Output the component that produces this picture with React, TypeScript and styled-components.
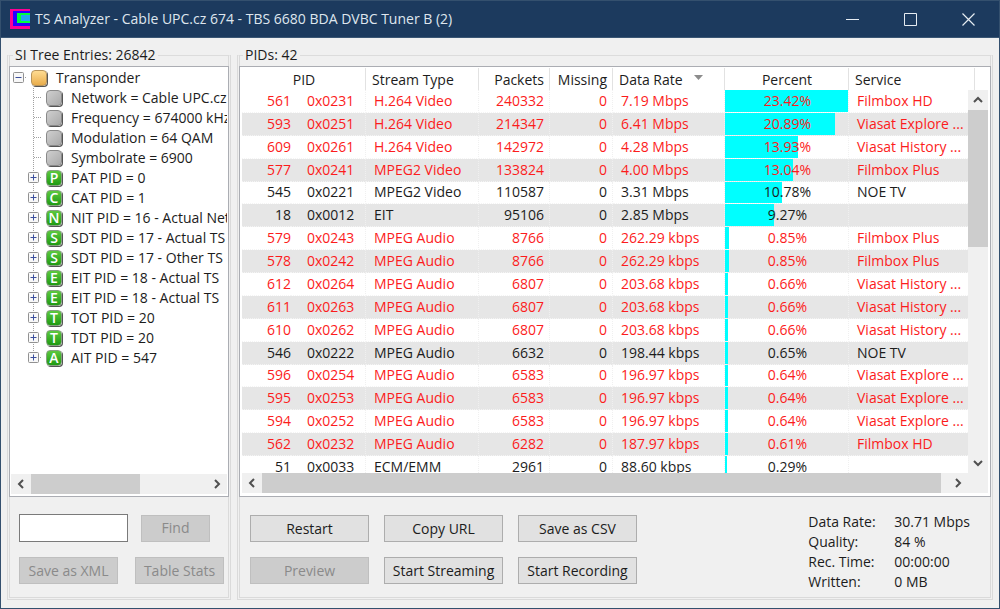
import React from 'react';
import styled, { createGlobalStyle } from 'styled-components';

const GlobalStyle = createGlobalStyle`
  * { box-sizing: border-box; }
  body {
    margin: 0;
    font: 14px/20px "Open Sans", "Noto Sans", sans-serif;
    color: #1c1c1c;
    background: #f0f0f0;
  }
`;

const Window = styled.div`
  height: 100vh;
  display: flex;
  flex-direction: column;
  background: #f0f0f0;
  border: 1px solid #34506e;
`;

const TitleBar = styled.header`
  flex: none;
  height: 37px;
  display: flex;
  align-items: center;
  gap: 5px;
  padding: 0 2px 0 9px;
  background: #1c3a5e;
  border-bottom: 1px solid #3a5674;
  color: #dfe6ee;
`;

const Title = styled.h1`
  flex: 1;
  min-width: 0;
  margin: 0;
  font-size: 14px;
  font-weight: 400;
  white-space: nowrap;
`;

const CaptionButton = styled.button`
  width: 58px;
  height: 36px;
  padding: 0;
  border: 0;
  background: none;
  color: #e6ecf2;
  display: flex;
  align-items: center;
  justify-content: center;
`;

const Main = styled.main`
  flex: 1;
  min-height: 0;
  display: grid;
  grid-template-columns: 224px minmax(0, 1fr);
  grid-template-rows: minmax(0, 1fr);
  gap: 6px;
  padding: 7px 6px 8px;
`;

const Group = styled.fieldset`
  display: flex;
  flex-direction: column;
  min-width: 0;
  min-height: 0;
  margin: 0;
  padding: 1px 0 0;
  border: 3px double #dadada;
  border-top: 1px solid #dcdcdc;
`;

const Legend = styled.legend`
  margin-left: 3px;
  padding: 0 2px;
  line-height: 20px;
`;

const ListBox = styled.div`
  flex: 1;
  min-height: 0;
  margin: 0 -1px;
  background: #fff;
  border: 1px solid #abadb3;
`;

const TreeBox = styled(ListBox)`
  display: flex;
  flex-direction: column;
  padding: 0 1px 2px;
`;

const TreeList = styled.ul`
  flex: 1;
  min-height: 0;
  margin: 0;
  padding: 1px 0 0;
  list-style: none;
  overflow: hidden;
`;

const SubList = styled.ul`
  margin: 0;
  padding: 0 0 0 15px;
  list-style: none;
`;

const TreeRow = styled.div`
  height: 20px;
  display: flex;
  align-items: center;
  white-space: nowrap;
`;

const BranchSvg = styled.svg`
  flex: none;
`;

const tones = {
  gold: { face: 'linear-gradient(#ffdc92, #e9ad4c)', edge: '#b8955c' },
  gray: { face: 'linear-gradient(135deg, #cfcfcf, #a9a9a9)', edge: '#8a8a8a' },
  green: { face: 'linear-gradient(#5cc93f, #1f9a12)', edge: '#86a080' },
};

const NodeIcon = styled.span<{ $tone: keyof typeof tones }>`
  flex: none;
  width: 16px;
  height: 16px;
  margin: 0 9px 1px 0;
  border: 1px solid ${(p) => tones[p.$tone].edge};
  border-radius: 4px;
  background: ${(p) => tones[p.$tone].face};
  box-shadow: 1px 1px 0 #555;
  color: #fff;
  font: 600 14px/14px "Open Sans", sans-serif;
  text-align: center;
`;

const ScrollBar = styled.div<{ $vertical?: boolean }>`
  flex: none;
  display: flex;
  flex-direction: ${(p) => (p.$vertical ? 'column' : 'row')};
  background: #f0f0f0;
  ${(p) => (p.$vertical ? 'width: 20px;' : 'height: 20px;')}
`;

const Arrow = styled.button`
  flex: none;
  width: 20px;
  height: 20px;
  padding: 0;
  border: 0;
  background: none;
  color: #505050;
  display: flex;
  align-items: center;
  justify-content: center;
`;

const Track = styled.div`
  flex: 1;
  display: flex;
  flex-direction: inherit;
`;

const Thumb = styled.div<{ $share: number }>`
  flex: 0 0 ${(p) => p.$share}%;
  background: #cdcdcd;
`;

const PidBox = styled(ListBox)`
  display: grid;
  grid-template-columns: minmax(0, 1fr) 20px;
  grid-template-rows: 22px minmax(0, 1fr) 20px;
  padding: 1px 2px 3px;
`;

const TableView = styled.div`
  grid-row: 1 / 3;
  overflow: hidden;
`;

const HeaderTail = styled.div`
  width: 7px;
  border-right: 1px solid #e2e2e2;
`;

const PidTable = styled.table`
  width: 100%;
  height: 411px;
  table-layout: fixed;
  border-collapse: separate;
  border-spacing: 0;
  white-space: nowrap;
`;

const Col = styled.col<{ $w?: number }>`
  ${(p) => (p.$w ? `width: ${p.$w}px;` : '')}
`;

type Align = 'left' | 'center' | 'right';

const Th = styled.th<{ $align?: Align; $last?: boolean }>`
  height: 22px;
  padding: 2px 5px 0 6px;
  line-height: 20px;
  font-weight: 400;
  text-align: ${(p) => p.$align || 'left'};
  border-right: ${(p) => (p.$last ? '0' : '1px solid #e2e2e2')};
`;

const Row = styled.tr<{ $alert: boolean }>`
  color: ${(p) => (p.$alert ? '#fc1c1c' : '#1c1c1c')};
  &:nth-child(even) { background: #e6e6e6; }
`;

const Td = styled.td<{ $align?: Align; $plain?: boolean }>`
  padding: 0 5px 0 8px;
  line-height: 20px;
  text-align: ${(p) => p.$align || 'left'};
  border-bottom: 1px dotted #f4f4f4;
  border-right: ${(p) => (p.$plain ? '0' : '1px dotted #f0f0f0')};
`;

const NumberTd = styled(Td)`
  padding: 0;
`;

const HexTd = styled(Td)`
  padding-left: 16px;
`;

const ServiceTd = styled(Td)`
  padding-right: 0;
`;

const PercentTd = styled(Td)`
  position: relative;
  padding: 0 0 0 2px;
`;

/* Meter fill that lies under the percentage label */
const Bar = styled.span`
  position: absolute;
  inset: 0 auto 0 0;
  min-width: 2px;
  background: #00ffff;
`;

const PercentLabel = styled.span`
  position: relative;
`;

const SortMark = styled.svg`
  margin: 0 0 4px 10px;
`;

const Controls = styled.div`
  flex: none;
  height: 100px;
  display: flex;
  justify-content: space-between;
  padding: 18px 18px 12px 9px;
`;

const SearchPanel = styled(Controls)`
  flex-direction: column;
  justify-content: flex-start;
  gap: 15px;
  padding: 17px 4px 13px 9px;
`;

const Line = styled.div`
  display: flex;
  align-items: center;
  justify-content: space-between;
`;

const SearchLine = styled(Line)`
  justify-content: flex-start;
  gap: 13px;
`;

const ButtonGrid = styled.div`
  display: grid;
  grid-template-columns: repeat(3, 119px);
  gap: 15px;
  align-content: start;
  padding-left: 1px;
`;

const Button = styled.button<{ $w?: number }>`
  width: ${(p) => (p.$w ? `${p.$w}px` : 'auto')};
  height: 27px;
  padding: 0;
  border: 1px solid #adadad;
  background: #e1e1e1;
  color: #1c1c1c;
  font: inherit;
  white-space: nowrap;
  &:disabled {
    background: #cccccc;
    border-color: #bfbfbf;
    color: #8a8a8a;
  }
`;

const TextBox = styled.input`
  width: 109px;
  height: 28px;
  padding: 0 4px;
  border: 1px solid #7a7a7a;
  background: #fff;
  font: inherit;
`;

const Stats = styled.dl`
  display: grid;
  grid-template-columns: 86px auto;
  align-content: start;
  margin: -3px 2px 0 0;
  line-height: 20px;
  dd { margin: 0; }
`;

type Dir = 'left' | 'right' | 'up' | 'down';
const chevrons: Record<Dir, string> = {
  left: 'M8 2 4 6l4 4',
  right: 'M4 2l4 4-4 4',
  up: 'M2 8l4-4 4 4',
  down: 'M2 4l4 4 4-4',
};

function ScrollArrow({ dir }: { dir: Dir }) {
  return (
    <Arrow type="button" aria-label={`Scroll ${dir}`}>
      <svg width="12" height="12" viewBox="0 0 12 12" fill="none" stroke="currentColor" strokeWidth="2">
        <path d={chevrons[dir]} />
      </svg>
    </Arrow>
  );
}

function Branch({ expander, last, root }: { expander?: 'plus' | 'minus'; last?: boolean; root?: boolean }) {
  return (
    <BranchSvg width="20" height="20" viewBox="0 0 20 20" fill="none" aria-hidden="true">
      <g stroke="#a0a0a0" strokeDasharray="1 1">
        {!root && <path d={last ? 'M7.5 0v10' : 'M7.5 0v20'} />}
        <path d={root ? 'M8 9.5h7' : 'M8 9.5h8'} />
      </g>
      {expander && (
        <>
          <rect x="2.5" y="4.500" width="10" height="10" rx="1" fill="#f8f8f8" stroke="#919191" />
          <path d={expander === 'plus' ? 'M4.5 9.5h6M7.5 6.5v6' : 'M4.5 9.5h6'} stroke="#3b4f9c" />
        </>
      )}
    </BranchSvg>
  );
}

const nodes: { letter?: string; text: string }[] = [
  { text: 'Network = Cable UPC.cz' },
  { text: 'Frequency = 674000 kHz' },
  { text: 'Modulation = 64 QAM' },
  { text: 'Symbolrate = 6900' },
  { letter: 'P', text: 'PAT PID = 0' },
  { letter: 'C', text: 'CAT PID = 1' },
  { letter: 'N', text: 'NIT PID = 16 - Actual Network' },
  { letter: 'S', text: 'SDT PID = 17 - Actual TS' },
  { letter: 'S', text: 'SDT PID = 17 - Other TS' },
  { letter: 'E', text: 'EIT PID = 18 - Actual TS' },
  { letter: 'E', text: 'EIT PID = 18 - Actual TS' },
  { letter: 'T', text: 'TOT PID = 20' },
  { letter: 'T', text: 'TDT PID = 20' },
  { letter: 'A', text: 'AIT PID = 547' },
];

type Entry = [number, string, string, number, string, number, string];
const entries: Entry[] = [
  [561, '0x0231', 'H.264 Video', 240332, '7.19 Mbps', 23.42, 'Filmbox HD'],
  [593, '0x0251', 'H.264 Video', 214347, '6.41 Mbps', 20.89, 'Viasat Explore ...'],
  [609, '0x0261', 'H.264 Video', 142972, '4.28 Mbps', 13.93, 'Viasat History ...'],
  [577, '0x0241', 'MPEG2 Video', 133824, '4.00 Mbps', 13.04, 'Filmbox Plus'],
  [545, '0x0221', 'MPEG2 Video', 110587, '3.31 Mbps', 10.78, 'NOE TV'],
  [18, '0x0012', 'EIT', 95106, '2.85 Mbps', 9.27, ''],
  [579, '0x0243', 'MPEG Audio', 8766, '262.29 kbps', 0.85, 'Filmbox Plus'],
  [578, '0x0242', 'MPEG Audio', 8766, '262.29 kbps', 0.85, 'Filmbox Plus'],
  [612, '0x0264', 'MPEG Audio', 6807, '203.68 kbps', 0.66, 'Viasat History ...'],
  [611, '0x0263', 'MPEG Audio', 6807, '203.68 kbps', 0.66, 'Viasat History ...'],
  [610, '0x0262', 'MPEG Audio', 6807, '203.68 kbps', 0.66, 'Viasat History ...'],
  [546, '0x0222', 'MPEG Audio', 6632, '198.44 kbps', 0.65, 'NOE TV'],
  [596, '0x0254', 'MPEG Audio', 6583, '196.97 kbps', 0.64, 'Viasat Explore ...'],
  [595, '0x0253', 'MPEG Audio', 6583, '196.97 kbps', 0.64, 'Viasat Explore ...'],
  [594, '0x0252', 'MPEG Audio', 6583, '196.97 kbps', 0.64, 'Viasat Explore ...'],
  [562, '0x0232', 'MPEG Audio', 6282, '187.97 kbps', 0.61, 'Filmbox HD'],
  [51, '0x0033', 'ECM/EMM', 2961, '88.60 kbps', 0.29, ''],
];
const peak = entries[0][5];

function Tree() {
  return (
    <TreeBox>
      <TreeList>
        <li>
          <TreeRow>
            <Branch expander="minus" root />
            <NodeIcon $tone="gold" />
            Transponder
          </TreeRow>
          <SubList>
            {nodes.map((n, i) => (
              <li key={i}>
                <TreeRow>
                  <Branch expander={n.letter ? 'plus' : undefined} last={i === nodes.length - 1} />
                  <NodeIcon $tone={n.letter ? 'green' : 'gray'}>{n.letter}</NodeIcon>
                  {n.text}
                </TreeRow>
              </li>
            ))}
          </SubList>
        </li>
      </TreeList>
      <ScrollBar>
        <ScrollArrow dir="left" />
        <Track><Thumb $share={62} /></Track>
        <ScrollArrow dir="right" />
      </ScrollBar>
    </TreeBox>
  );
}

function PidList() {
  return (
    <PidBox>
      <TableView>
        <PidTable>
          <colgroup>
            <Col $w={49} />
            <Col $w={75} />
            <Col $w={113} />
            <Col $w={71} />
            <Col $w={63} />
            <Col $w={112} />
            <Col $w={124} />
            <Col />
          </colgroup>
          <thead>
            <tr>
              <Th colSpan={2} $align="center">PID</Th>
              <Th>Stream Type</Th>
              <Th $align="right">Packets</Th>
              <Th $align="right">Missing</Th>
              <Th>
                Data Rate
                <SortMark width="11" height="6" viewBox="0 0 11 6" aria-hidden="true">
                  <path d="M1 0h9L5.500 5z" fill="#8c8c8c" />
                </SortMark>
              </Th>
              <Th $align="center">Percent</Th>
              <Th $last>Service</Th>
            </tr>
          </thead>
          <tbody>
            {entries.map(([pid, hex, type, packets, rate, percent, service]) => (
              <Row key={pid} $alert={![545, 18, 546, 51].includes(pid)}>
                <NumberTd $align="right" $plain>{pid}</NumberTd>
                <HexTd>{hex}</HexTd>
                <Td>{type}</Td>
                <Td $align="right">{packets}</Td>
                <Td $align="right">0</Td>
                <Td>{rate}</Td>
                <PercentTd $align="center">
                  <Bar style={{ width: `${(percent / peak) * 100}%` }} />
                  <PercentLabel>{percent.toFixed(2)}%</PercentLabel>
                </PercentTd>
                <ServiceTd $plain>{service}</ServiceTd>
              </Row>
            ))}
          </tbody>
        </PidTable>
      </TableView>
      <HeaderTail />
      <ScrollBar $vertical>
        <ScrollArrow dir="up" />
        <Track><Thumb $share={40} /></Track>
        <ScrollArrow dir="down" />
      </ScrollBar>
      <ScrollBar>
        <ScrollArrow dir="left" />
        <Track><Thumb $share={99} /></Track>
        <ScrollArrow dir="right" />
      </ScrollBar>
      <ScrollBar />
    </PidBox>
  );
}

export default function App() {
  return (
    <Window>
      <GlobalStyle />
      <TitleBar>
        <svg width="20" height="20" viewBox="0 0 20 20" aria-hidden="true">
          <path d="M0 0h20v2H3v15h17v3H0z" fill="#ff0096" />
          <path d="M3 2h17v2H7v10h13v3H3z" fill="#2a00ff" />
          <path d="M7 4h13v2h-9v6h9v2H7z" fill="#00ff3c" />
          <path d="M11 6h9v6h-9z" fill="#1eaaf0" />
        </svg>
        <Title>TS Analyzer - Cable UPC.cz 674 - TBS 6680 BDA DVBC Tuner B (2)</Title>
        <Line>
          <CaptionButton type="button" aria-label="Minimize">
            <svg width="13" height="13" stroke="currentColor"><path d="M0 6.500h13" /></svg>
          </CaptionButton>
          <CaptionButton type="button" aria-label="Maximize">
            <svg width="13" height="13" fill="none" stroke="currentColor"><path d="M.5.5h12v12H.5z" /></svg>
          </CaptionButton>
          <CaptionButton type="button" aria-label="Close">
            <svg width="13" height="13" stroke="currentColor" strokeWidth="1.200"><path d="M.5.5l12 12M12.500.5l-12 12" /></svg>
          </CaptionButton>
        </Line>
      </TitleBar>
      <Main>
        <Group>
          <Legend>SI Tree Entries: 26842</Legend>
          <Tree />
          <SearchPanel>
            <SearchLine>
              <TextBox type="text" aria-label="Search text" />
              <Button type="button" $w={69} disabled>Find</Button>
            </SearchLine>
            <Line>
              <Button type="button" $w={99} disabled>Save as XML</Button>
              <Button type="button" $w={89} disabled>Table Stats</Button>
            </Line>
          </SearchPanel>
        </Group>
        <Group>
          <Legend>PIDs: 42</Legend>
          <PidList />
          <Controls>
            <ButtonGrid>
              <Button type="button">Restart</Button>
              <Button type="button">Copy URL</Button>
              <Button type="button">Save as CSV</Button>
              <Button type="button" disabled>Preview</Button>
              <Button type="button">Start Streaming</Button>
              <Button type="button">Start Recording</Button>
            </ButtonGrid>
            <Stats>
              <dt>Data Rate:</dt><dd>30.71 Mbps</dd>
              <dt>Quality:</dt><dd>84 %</dd>
              <dt>Rec. Time:</dt><dd>00:00:00</dd>
              <dt>Written:</dt><dd>0 MB</dd>
            </Stats>
          </Controls>
        </Group>
      </Main>
    </Window>
  );
}
